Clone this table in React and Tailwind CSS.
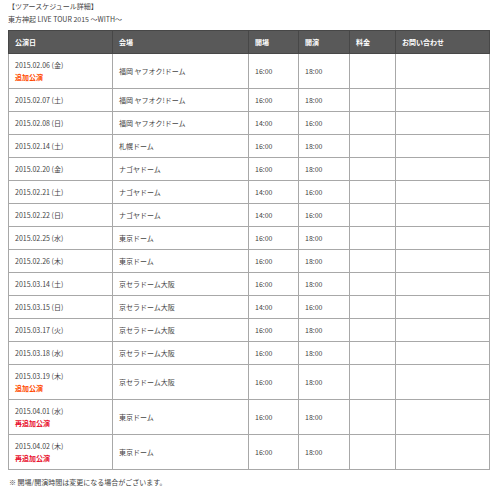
import React from 'react';

const rows = [
  { date: '2015.02.06 (金)', note: '追加公演', noteType: 'add', venue: '福岡 ヤフオク!ドーム', open: '16:00', start: '18:00' },
  { date: '2015.02.07 (土)', venue: '福岡 ヤフオク!ドーム', open: '16:00', start: '18:00' },
  { date: '2015.02.08 (日)', venue: '福岡 ヤフオク!ドーム', open: '14:00', start: '16:00' },
  { date: '2015.02.14 (土)', venue: '札幌ドーム', open: '16:00', start: '18:00' },
  { date: '2015.02.20 (金)', venue: 'ナゴヤドーム', open: '16:00', start: '18:00' },
  { date: '2015.02.21 (土)', venue: 'ナゴヤドーム', open: '14:00', start: '16:00' },
  { date: '2015.02.22 (日)', venue: 'ナゴヤドーム', open: '14:00', start: '16:00' },
  { date: '2015.02.25 (水)', venue: '東京ドーム', open: '16:00', start: '18:00' },
  { date: '2015.02.26 (木)', venue: '東京ドーム', open: '16:00', start: '18:00' },
  { date: '2015.03.14 (土)', venue: '京セラドーム大阪', open: '16:00', start: '18:00' },
  { date: '2015.03.15 (日)', venue: '京セラドーム大阪', open: '14:00', start: '16:00' },
  { date: '2015.03.17 (火)', venue: '京セラドーム大阪', open: '16:00', start: '18:00' },
  { date: '2015.03.18 (水)', venue: '京セラドーム大阪', open: '16:00', start: '18:00' },
  { date: '2015.03.19 (木)', note: '追加公演', noteType: 'add', venue: '京セラドーム大阪', open: '16:00', start: '18:00' },
  { date: '2015.04.01 (水)', note: '再追加公演', noteType: 'readd', venue: '東京ドーム', open: '16:00', start: '18:00' },
  { date: '2015.04.02 (木)', note: '再追加公演', noteType: 'readd', venue: '東京ドーム', open: '16:00', start: '18:00' },
];

const headers = ['公演日', '会場', '開場', '開演', '料金', 'お問い合わせ'];

const td = 'border border-[#a8a8a8] px-[6px] py-[5px] align-middle';
const th = 'border border-[#474747] px-[6px] py-[5px] text-left font-bold';

export default function App() {
  return (
    <div className="w-[500px] h-[490px] bg-white text-[#444] text-[7px] leading-[12px] px-[8px]" style={{ fontFamily: '"Noto Sans CJK JP", "Noto Sans", sans-serif' }}>
      {/* title */}
      <div>【ツアースケジュール詳細】</div>
      <div className="mt-[1px] mb-[5px]">東方神起 LIVE TOUR 2015 ～WITH～</div>

      <table className="w-[481px] table-fixed border-collapse">
        <colgroup>
          <col className="w-[104px]" />
          <col className="w-[136px]" />
          <col className="w-[50px]" />
          <col className="w-[51px]" />
          <col className="w-[46px]" />
          <col className="w-[94px]" />
        </colgroup>
        <thead>
          <tr className="bg-[#595959] text-white">
            {headers.map((h) => (
              <th key={h} className={th}>{h}</th>
            ))}
          </tr>
        </thead>
        <tbody>
          {rows.map((r) => (
            <tr key={r.date}>
              <td className={td}>
                <div>{r.date}</div>
                {r.note && (
                  <div className={r.noteType === 'add' ? 'text-[#ff4a00] font-bold' : 'text-[#e8102e] font-bold'}>
                    {r.note}
                  </div>
                )}
              </td>
              <td className={td}>{r.venue}</td>
              <td className={td}>{r.open}</td>
              <td className={td}>{r.start}</td>
              <td className={td}></td>
              <td className={td}></td>
            </tr>
          ))}
        </tbody>
      </table>

      {/* footnote */}
      <div className="mt-[6px] pl-[1px]">※ 開場/開演時間は変更になる場合がございます。</div>
    </div>
  );
}
